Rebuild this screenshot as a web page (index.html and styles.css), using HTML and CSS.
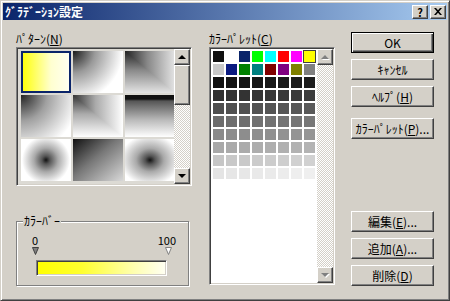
FILE: index.html
```html
<!DOCTYPE html>
<html lang="ja">
<head>
    <meta charset="UTF-8">
    <title>グラデーション設定</title>
    <link rel="stylesheet" href="styles.css">
</head>
<body>
    <div class="window">
        <div class="titlebar">
            <span class="title">ｸﾞﾗﾃﾞｰｼｮﾝ設定</span>
            <div class="caption-buttons">
                <div class="cap-btn raised">?</div>
                <div class="cap-btn raised">
                    <svg width="8" height="7" viewBox="0 0 8 7">
                        <path d="M0 0h2l2 2.2L6 0h2L5 3.5L8 7H6L4 4.8L2 7H0l3-3.5z" fill="#000"/>
                    </svg>
                </div>
            </div>
        </div>

        <div class="client">
            <!-- Pattern list + color bar -->
            <div class="col-left">
                <div class="caption">ﾊﾟﾀｰﾝ(<u>N</u>)</div>
                <div class="listbox patterns">
                    <div class="pattern-grid">
                        <div class="cell p1 selected"></div>
                        <div class="cell p2"></div>
                        <div class="cell corner p3"></div>
                        <div class="cell p4"></div>
                        <div class="cell corner p5"></div>
                        <div class="cell p6"></div>
                        <div class="cell p7"></div>
                        <div class="cell p8"></div>
                        <div class="cell p9"></div>
                    </div>
                    <div class="scrollbar">
                        <div class="sb-btn raised"><span class="arrow up"></span></div>
                        <div class="sb-thumb raised"></div>
                        <div class="sb-track"></div>
                        <div class="sb-btn raised"><span class="arrow down"></span></div>
                    </div>
                </div>

                <div class="group">
                    <span class="group-title">ｶﾗｰﾊﾞｰ</span>
                    <div class="marks"><span>0</span><span>100</span></div>
                    <div class="pointers">
                        <svg width="7" height="8" viewBox="0 0 7 8">
                            <path d="M0.5 0.5h6L3.5 7.5z" fill="#808080" stroke="#404040"/>
                        </svg>
                        <svg width="7" height="8" viewBox="0 0 7 8">
                            <path d="M0.5 0.5h6L3.5 7.5z" fill="#fff" stroke="#808080"/>
                        </svg>
                    </div>
                    <div class="bar"></div>
                </div>
            </div>

            <!-- Color palette -->
            <div class="col-mid">
                <div class="caption">ｶﾗｰﾊﾟﾚｯﾄ(<u>C</u>)</div>
                <div class="listbox palette">
                    <div class="palette-grid" id="palette"></div>
                    <div class="scrollbar disabled">
                        <div class="sb-btn raised"><span class="arrow up"></span></div>
                        <div class="sb-track"></div>
                        <div class="sb-btn raised"><span class="arrow down"></span></div>
                    </div>
                </div>
            </div>

            <!-- Buttons -->
            <div class="col-right">
                <button class="btn default">OK</button>
                <button class="btn">ｷｬﾝｾﾙ</button>
                <button class="btn">ﾍﾙﾌﾟ(<u>H</u>)</button>
                <button class="btn spaced">ｶﾗｰﾊﾟﾚｯﾄ(<u>P</u>)...</button>
                <button class="btn push-down">編集(<u>E</u>)...</button>
                <button class="btn">追加(<u>A</u>)...</button>
                <button class="btn">削除(<u>D</u>)</button>
            </div>
        </div>
    </div>

    <script>
        const basic = [
            "#101010", "#ffffff", "#0a246a", "#00ff00", "#00ffff", "#ff0000", "#ff00ff", "#ffff00",
            "#c8c8c8", "#0a1a80", "#008000", "#008080", "#800000", "#800080", "#808000", "#808080"
        ];
        const grid = document.getElementById("palette");
        const colors = basic.slice();
        // 8 rows of grays, each row a bit lighter than the last
        for (let r = 0; r < 8; r++) {
            for (let c = 0; c < 8; c++) {
                const v = Math.min(245, Math.round(18 + r * 30 + c * 1.6));
                colors.push(`rgb(${v}, ${v}, ${v})`);
            }
        }
        colors.forEach((c, i) => {
            const cell = document.createElement("div");
            cell.className = i === 7 ? "swatch selected" : "swatch";
            cell.style.background = c;
            grid.appendChild(cell);
        });
    </script>
</body>
</html>
```

FILE: styles.css
```css
* {
    box-sizing: border-box;
}

body {
    margin: 0;
    background: #d4d0c8;
    color: #000;
    font-family: "Noto Sans CJK JP", sans-serif;
    font-size: 12px;
}

.window {
    width: 450px;
    height: 301px;
    display: flex;
    flex-direction: column;
    padding: 2px;
    background: #d4d0c8;
    border: 1px solid;
    border-color: #d4d0c8 #404040 #404040 #d4d0c8;
    box-shadow: inset 1px 1px #fff, inset -1px -1px #808080;
}

.raised {
    background: #d4d0c8;
    border: 1px solid;
    border-color: #fff #404040 #404040 #fff;
    box-shadow: inset -1px -1px #808080;
}

/* title bar */
.titlebar {
    height: 18px;
    display: flex;
    align-items: center;
    justify-content: space-between;
    padding: 0 1px 0 2px;
    background: linear-gradient(to right, #0a246a, #a6caf0);
    color: #fff;
    font-weight: bold;
    line-height: 16px;
}

.caption-buttons {
    display: flex;
    gap: 2px;
}

.cap-btn {
    width: 16px;
    height: 14px;
    display: flex;
    align-items: center;
    justify-content: center;
    color: #000;
    font-size: 11px;
    font-weight: bold;
    line-height: 12px;
}

/* client area */
.client {
    flex: 1;
    display: flex;
    gap: 17px;
    padding: 11px 0 12px 13px;
}

.caption {
    height: 15px;
    margin-bottom: 1px;
    line-height: 15px;
    white-space: nowrap;
}

.col-left {
    width: 176px;
    display: flex;
    flex-direction: column;
}

.col-mid {
    width: 126px;
    margin-right: -1px;
}

.col-right {
    width: 83px;
    display: flex;
    flex-direction: column;
    padding-top: 1px;
}

.listbox {
    display: flex;
    padding: 1px;
    background: #fff;
    border: 1px solid;
    border-color: #808080 #fff #fff #808080;
    box-shadow: inset 1px 1px #404040, inset -1px -1px #d4d0c8;
}

.patterns {
    height: 139px;
}

.palette {
    height: 238px;
}

/* pattern cells */
.pattern-grid {
    flex: 1;
    display: grid;
    grid-template-columns: repeat(3, 50px);
    grid-auto-rows: 42px;
    gap: 2px;
    align-content: start;
    padding: 2px 2px 2px 3px;
    overflow: hidden;
    background: #dcdad4;
}

.cell {
    position: relative;
    background: #fff;
}

.cell.selected {
    box-shadow: inset 0 0 0 2px #0a246a;
}

.p1 {
    background: linear-gradient(to right, #ffff00, #ffffd0 60%, #fffff4);
}

.p2 {
    background: radial-gradient(circle at 0 0, #1a1a1a, #9a9a9a 22px, #fff 50px);
}

.corner::after {
    content: "";
    position: absolute;
    inset: 0;
    clip-path: polygon(0 0, 0 100%, 100% 100%);
}

.p3 {
    background: linear-gradient(to right, #222, #888 45%, #e4e4e4);
}

.p3::after {
    background: linear-gradient(to bottom, #222, #888 45%, #e4e4e4);
}

.p4 {
    background: radial-gradient(circle at 0 0, #222, #a0a0a0 26px, #fff 58px);
}

.p5 {
    background: linear-gradient(to right, #333, #aaa 45%, #fff);
}

.p5::after {
    background: linear-gradient(to bottom, #333, #aaa 45%, #fff);
}

.p6 {
    background: linear-gradient(to bottom, #111 0, #111 4px, #555 6px, #bbb 60%, #fff);
}

.p7 {
    background: radial-gradient(circle at center, #111 0, #555 4px, #aaa 12px, #fff 24px);
}

.p8 {
    background: linear-gradient(to bottom right, #111, #777 45%, #d8d8d8);
}

.p9 {
    background: radial-gradient(ellipse at center, #111 0, #555 5px, #aaa 14px, #ddd 24px, #fff 30px);
}

/* scrollbars */
.scrollbar {
    width: 16px;
    display: flex;
    flex-direction: column;
}

.sb-btn {
    height: 16px;
    display: flex;
    align-items: center;
    justify-content: center;
}

.sb-thumb {
    height: 40px;
}

.sb-track {
    flex: 1;
    background: repeating-conic-gradient(#d4d0c8 0 25%, #fff 0 50%) 0 0 / 2px 2px;
}

.arrow {
    width: 0;
    height: 0;
    border-left: 4px solid transparent;
    border-right: 4px solid transparent;
}

.arrow.up {
    border-bottom: 4px solid #000;
}

.arrow.down {
    border-top: 4px solid #000;
}

.disabled .arrow.up {
    border-bottom-color: #808080;
    filter: drop-shadow(1px 1px 0 #fff);
}

.disabled .arrow.down {
    border-top-color: #808080;
    filter: drop-shadow(1px 1px 0 #fff);
}

/* palette swatches */
.palette-grid {
    flex: 1;
    display: grid;
    grid-template-columns: repeat(8, 11px);
    grid-auto-rows: 11px;
    gap: 2px;
    align-content: start;
    padding: 2px;
}

.swatch.selected {
    outline: 1px solid #404040;
    outline-offset: 0;
}

/* color bar group */
.group {
    position: relative;
    width: 173px;
    height: 65px;
    margin-top: 35px;
    padding: 0 12px 0 15px;
    border: 1px solid #808080;
    box-shadow: inset 1px 1px #fff, 1px 1px #fff;
}

.group-title {
    position: absolute;
    top: -8px;
    left: 6px;
    padding: 0 1px;
    background: #d4d0c8;
    line-height: 14px;
}

.marks {
    display: flex;
    justify-content: space-between;
    height: 10px;
    margin-top: 13px;
    font-size: 11px;
    line-height: 10px;
}

.pointers {
    display: flex;
    justify-content: space-between;
    height: 8px;
    margin: 2px 4px 0 0;
}

.pointers svg {
    display: block;
}

.bar {
    height: 16px;
    margin: 5px 9px 0 4px;
    background: linear-gradient(to right, #ffff00, #ffff30 35%, #ffffb0 75%, #fffff4);
    border: 1px solid;
    border-color: #808080 #fff #fff #808080;
    box-shadow: inset 1px 1px #404040, inset -1px -1px #d4d0c8;
}

/* push buttons */
.btn {
    width: 83px;
    height: 21px;
    margin-top: 6px;
    padding: 0;
    font: inherit;
    color: #000;
    background: #d4d0c8;
    border: 1px solid;
    border-color: #fff #404040 #404040 #fff;
    box-shadow: inset -1px -1px #808080;
    white-space: nowrap;
}

.btn.default {
    margin-top: 0;
    border: 1px solid #000;
    box-shadow: inset 1px 1px #fff, inset -1px -1px #404040, inset -2px -2px #808080;
}

.btn.spaced {
    margin-top: 11px;
}

.btn.push-down {
    margin-top: auto;
}
```
